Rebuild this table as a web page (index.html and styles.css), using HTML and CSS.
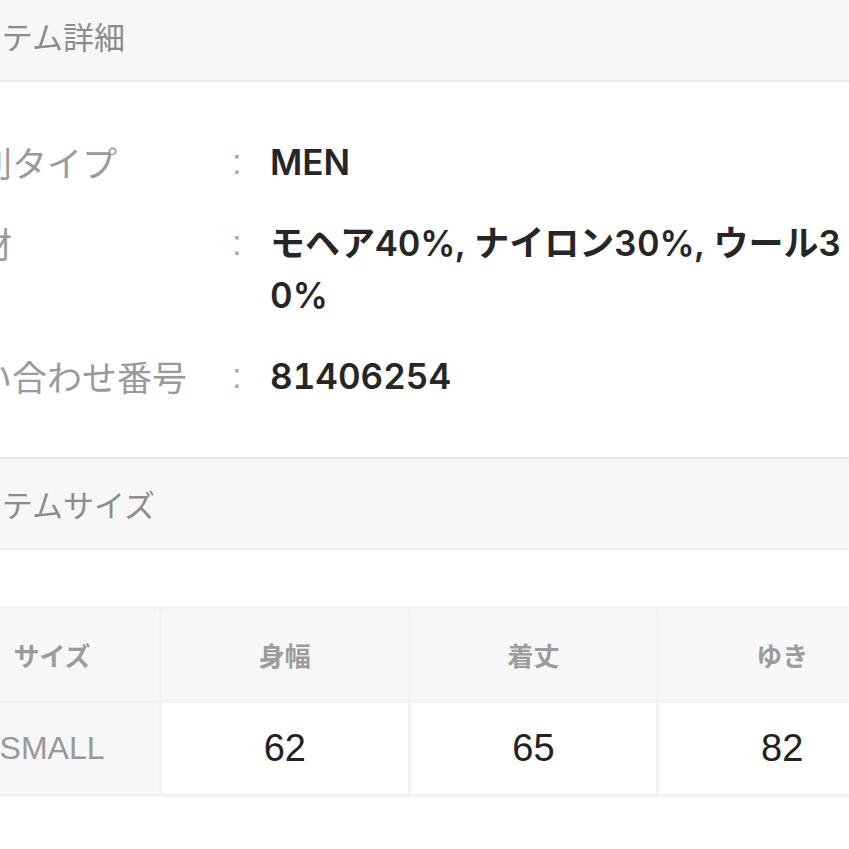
FILE: index.html
```html
<!DOCTYPE html>
<html lang="ja">
<head>
<meta charset="utf-8">
<title>アイテム詳細</title>
<link rel="stylesheet" href="styles.css">
</head>
<body>
<div class="page">
  <div class="section-head">アイテム詳細</div>
  <div class="details">
    <div class="row">
      <div class="label">性別タイプ</div>
      <div class="colon">:</div>
      <div class="value">MEN</div>
    </div>
    <div class="row">
      <div class="label">素材</div>
      <div class="colon">:</div>
      <div class="value">モヘア40%, ナイロン30%, ウール30%</div>
    </div>
    <div class="row">
      <div class="label">問い合わせ番号</div>
      <div class="colon">:</div>
      <div class="value">81406254</div>
    </div>
  </div>
  <div class="section-head">アイテムサイズ</div>
  <div class="size-wrap">
    <table class="size-table">
      <colgroup>
        <col class="col-size">
        <col>
        <col>
        <col>
      </colgroup>
      <thead>
        <tr>
          <th>サイズ</th>
          <th>身幅</th>
          <th>着丈</th>
          <th>ゆき</th>
        </tr>
      </thead>
      <tbody>
        <tr>
          <td class="size-name">SMALL</td>
          <td>62</td>
          <td>65</td>
          <td>82</td>
        </tr>
      </tbody>
    </table>
  </div>
</div>
</body>
</html>
```
FILE: styles.css
```css
html, body {
  margin: 0;
  padding: 0;
  background: #ffffff;
  overflow: hidden;
}

body {
  width: 849px;
  height: 849px;
  font-family: Inter, "Noto Sans CJK JP", sans-serif;
}

.page {
  width: 966px;
  margin: -11px 0 0 -58px;
}

.section-head {
  height: 89px;
  display: flex;
  align-items: center;
  background: #f7f7f7;
  border-top: 2px solid #ebebeb;
  border-bottom: 2px solid #ebebeb;
  font-family: "Noto Sans CJK JP", sans-serif;
  font-size: 31px;
  color: #8c8c8c;
}

.details {
  padding: 54px 0 55px;
  display: flex;
  flex-direction: column;
  gap: 28px;
}

.row {
  display: grid;
  grid-template-columns: 290px 38px 1fr;
  font-size: 35px;
  line-height: 52.5px;
}

.label {
  font-family: "Noto Sans CJK JP", sans-serif;
  color: #9a9a9a;
  white-space: nowrap;
}

.colon {
  font-family: "Liberation Sans", sans-serif;
  color: #a8a8a8;
}

.value {
  font-family: Inter, "Noto Sans CJK JP", sans-serif;
  font-weight: 600;
  color: #262626;
  max-width: 612px;
  word-break: break-all;
  font-variant-numeric: tabular-nums;
}

.size-wrap {
  padding-top: 56px;
}

.size-table {
  width: 100%;
  border-collapse: collapse;
  table-layout: fixed;
}

.col-size {
  width: 217px;
}

.size-table th,
.size-table td {
  border: 3px solid #f2f2f2;
  height: 91px;
  padding: 0;
  text-align: center;
  vertical-align: middle;
}

.size-table th {
  background: #f7f7f7;
  font-family: "Noto Sans CJK JP", sans-serif;
  font-weight: 700;
  font-size: 26px;
  color: #9c9c9c;
}

.size-table td {
  background: #ffffff;
  font-family: "Liberation Sans", sans-serif;
  font-size: 38px;
  color: #222222;
}

.size-table td.size-name {
  background: #f7f7f7;
  font-size: 32px;
  color: #999999;
}
```
